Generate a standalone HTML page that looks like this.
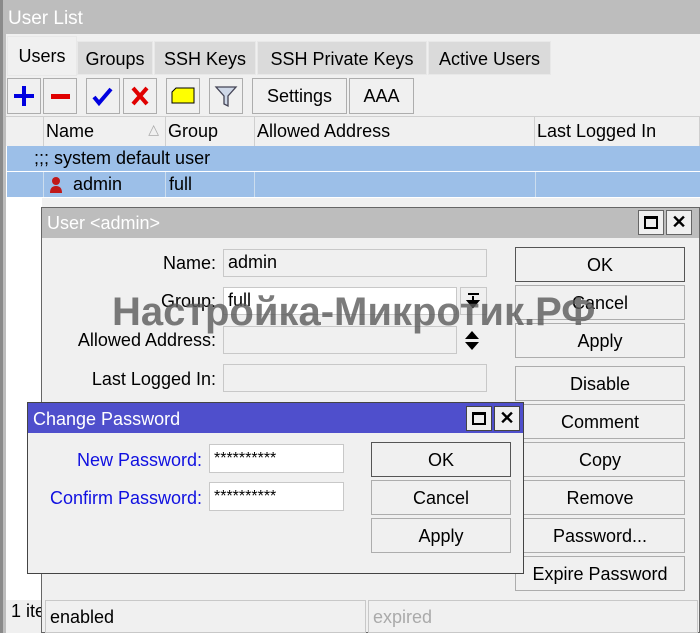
<!DOCTYPE html>
<html><head><meta charset="utf-8"><style>
*{box-sizing:border-box;margin:0;padding:0}
body{width:700px;height:633px;overflow:hidden;background:#f0f0f0;font-family:"Liberation Sans",sans-serif;font-size:18px;color:#000;position:relative}
.a{position:absolute}
.btn{position:absolute;border:1px solid #adadad;background:#f0f0f0;text-align:center;font-size:18px}
.tab{position:absolute;background:#dadada;border:1px solid #e8e8e8;text-align:center}
.hd{position:absolute;top:117px;height:29px;border-right:1px solid #cfcfcf;padding:4px 2px;background:#f0f0f0}
.inp{position:absolute;border:1px solid #c8c8c8;background:#f0f0f0;padding:2px 4px}
.lbl{position:absolute;text-align:right}
</style></head><body>
<div class="a" style="left:0;top:0;width:700px;height:34px;background:#bdbdbd;border-left:3px solid #8a8a8a"></div>
<div class="a" style="left:8px;top:8px;color:#fff;font-size:19px">User List</div>
<div class="a" style="left:0;top:34px;width:3px;height:599px;background:#8a8a8a"></div>
<div class="a" style="left:3px;top:34px;width:3px;height:599px;background:#bdbdbd"></div>
<div class="tab" style="left:7px;top:36px;width:70px;height:40px;background:#f0f0f0;padding-top:9px">Users</div>
<div class="tab" style="left:77px;top:41px;width:76px;height:34px;padding-top:7px">Groups</div>
<div class="tab" style="left:154px;top:41px;width:102px;height:34px;padding-top:7px">SSH Keys</div>
<div class="tab" style="left:257px;top:41px;width:170px;height:34px;padding-top:7px">SSH Private Keys</div>
<div class="tab" style="left:428px;top:41px;width:123px;height:34px;padding-top:7px">Active Users</div>
<div class="btn" style="left:7px;top:78px;width:34px;height:36px"><svg width="32" height="34"><path d="M16 7v20M6 17h20" stroke="#0000e0" stroke-width="4"/></svg></div>
<div class="btn" style="left:43px;top:78px;width:34px;height:36px"><div class="a" style="left:7px;top:15px;width:19px;height:5px;background:#e00000"></div></div>
<div class="btn" style="left:86px;top:78px;width:34px;height:36px"><svg width="32" height="34"><path d="M7 18l5 6 12-14" stroke="#0000e0" stroke-width="4" fill="none"/></svg></div>
<div class="btn" style="left:123px;top:78px;width:34px;height:36px"><svg width="32" height="34"><path d="M9 9l14 16M23 9l-14 16" stroke="#e00000" stroke-width="4"/></svg></div>
<div class="btn" style="left:166px;top:78px;width:34px;height:36px"><svg width="32" height="34"><path d="M5 13l4-4h18v15H5z" fill="#ffff00" stroke="#000" stroke-width="1"/></svg></div>
<div class="btn" style="left:209px;top:78px;width:34px;height:36px"><svg width="32" height="34"><path d="M6 8h20l-8 9v10l-4-2v-8z" fill="#cfd8e8" stroke="#445" stroke-width="1.3"/></svg></div>
<div class="btn" style="left:252px;top:78px;width:95px;height:36px;padding-top:7px">Settings</div>
<div class="btn" style="left:349px;top:78px;width:65px;height:36px;padding-top:7px">AAA</div>
<div class="a" style="left:6px;top:116px;width:694px;height:1px;background:#cfcfcf"></div>
<div class="hd" style="left:7px;width:37px"></div>
<div class="hd" style="left:44px;width:122px">Name<span style="position:absolute;right:6px;color:#aaa;font-size:14px">△</span></div>
<div class="hd" style="left:166px;width:89px">Group</div>
<div class="hd" style="left:255px;width:280px">Allowed Address</div>
<div class="hd" style="left:535px;width:165px">Last Logged In</div>
<div class="a" style="left:6px;top:146px;width:694px;height:52px;background:#fff"></div>
<div class="a" style="left:7px;top:146px;width:693px;height:25px;background:#9cbfe8;padding:2px 27px">;;; system default user</div>
<div class="a" style="left:7px;top:172px;width:693px;height:25px;background:#9cbfe8"></div>
<div class="a" style="left:43px;top:172px;width:1px;height:25px;background:#cde"></div>
<div class="a" style="left:165px;top:172px;width:1px;height:25px;background:#cde"></div>
<div class="a" style="left:254px;top:172px;width:1px;height:25px;background:#cde"></div>
<div class="a" style="left:535px;top:172px;width:1px;height:25px;background:#cde"></div>
<svg class="a" style="left:49px;top:176px" width="14" height="18"><circle cx="7" cy="5" r="4" fill="#c01818"/><path d="M1 17q0-7 6-7t6 7z" fill="#c01818"/></svg>
<div class="a" style="left:73px;top:174px">admin</div>
<div class="a" style="left:169px;top:174px">full</div>
<div class="a" style="left:6px;top:198px;width:36px;height:402px;background:#fff"></div>
<div class="a" style="left:11px;top:601px">1 ite</div>
<div class="a" style="left:41px;top:207px;width:659px;height:426px;border:1px solid #666;background:#f0f0f0"></div>
<div class="a" style="left:42px;top:208px;width:657px;height:30px;background:#bdbdbd"></div>
<div class="a" style="left:47px;top:213px;color:#fff">User &lt;admin&gt;</div>
<div class="a" style="left:638px;top:210px;width:26px;height:25px;border:1px solid #666;background:#f0f0f0"><div class="a" style="left:5px;top:5px;width:14px;height:13px;border:2px solid #000;border-top-width:3px"></div></div>
<div class="a" style="left:666px;top:210px;width:26px;height:25px;border:1px solid #666;background:#f0f0f0;text-align:center;font-weight:bold;line-height:22px">✕</div>
<div class="lbl" style="left:60px;width:156px;top:253px">Name:</div>
<div class="inp" style="left:223px;top:249px;width:264px;height:28px">admin</div>
<div class="lbl" style="left:60px;width:156px;top:291px">Group:</div>
<div class="inp" style="left:223px;top:287px;width:234px;height:28px;background:#fff">full</div>
<div class="a" style="left:460px;top:287px;width:27px;height:28px;border:1px solid #c8c8c8"><svg width="25" height="26"><path d="M7 6h11M12 8v6M7 13l5 6 5-6z" stroke="#000" stroke-width="2" fill="#000"/></svg></div>
<svg class="a" style="left:462px;top:328px" width="20" height="26"><path d="M3 11l7-8 7 8z" fill="#000"/><path d="M3 14l7 8 7-8z" fill="#000"/></svg>
<div class="lbl" style="left:40px;width:176px;top:330px">Allowed Address:</div>
<div class="inp" style="left:223px;top:326px;width:234px;height:28px"></div>
<div class="lbl" style="left:40px;width:176px;top:369px">Last Logged In:</div>
<div class="inp" style="left:223px;top:364px;width:264px;height:28px"></div>
<div class="btn" style="left:515px;top:247px;width:170px;height:35px;border-color:#555;padding-top:7px">OK</div>
<div class="btn" style="left:515px;top:285px;width:170px;height:35px;padding-top:7px">Cancel</div>
<div class="btn" style="left:515px;top:323px;width:170px;height:35px;padding-top:7px">Apply</div>
<div class="btn" style="left:515px;top:366px;width:170px;height:35px;padding-top:7px">Disable</div>
<div class="btn" style="left:515px;top:404px;width:170px;height:35px;padding-top:7px">Comment</div>
<div class="btn" style="left:515px;top:442px;width:170px;height:35px;padding-top:7px">Copy</div>
<div class="btn" style="left:515px;top:480px;width:170px;height:35px;padding-top:7px">Remove</div>
<div class="btn" style="left:515px;top:518px;width:170px;height:35px;padding-top:7px">Password...</div>
<div class="btn" style="left:515px;top:556px;width:170px;height:35px;padding-top:7px">Expire Password</div>
<div class="inp" style="left:45px;top:600px;width:321px;height:33px;padding-top:6px">enabled</div>
<div class="inp" style="left:368px;top:600px;width:330px;height:33px;padding-top:6px;color:#aaa">expired</div>
<div class="a" style="left:112px;top:290px;font-size:40px;font-weight:bold;color:rgba(90,90,90,0.8);white-space:nowrap">Настройка-Микротик.РФ</div>
<div class="a" style="left:27px;top:402px;width:497px;height:172px;border:1px solid #444;background:#f0f0f0"></div>
<div class="a" style="left:28px;top:403px;width:495px;height:30px;background:#4f4fcc"></div>
<div class="a" style="left:33px;top:409px;color:#fff">Change Password</div>
<div class="a" style="left:466px;top:406px;width:26px;height:25px;border:1px solid #444;background:#f0f0f0"><div class="a" style="left:5px;top:5px;width:14px;height:13px;border:2px solid #000;border-top-width:3px"></div></div>
<div class="a" style="left:494px;top:406px;width:26px;height:25px;border:1px solid #444;background:#f0f0f0;text-align:center;font-weight:bold;line-height:22px">✕</div>
<div class="lbl" style="left:30px;width:172px;top:450px;color:#1010e0">New Password:</div>
<div class="inp" style="left:209px;top:444px;width:135px;height:29px;background:#fff;font-size:16px;padding-top:5px">**********</div>
<div class="lbl" style="left:30px;width:172px;top:488px;color:#1010e0">Confirm Password:</div>
<div class="inp" style="left:209px;top:482px;width:135px;height:29px;background:#fff;font-size:16px;padding-top:5px">**********</div>
<div class="btn" style="left:371px;top:442px;width:140px;height:35px;border-color:#555;padding-top:7px">OK</div>
<div class="btn" style="left:371px;top:480px;width:140px;height:35px;padding-top:7px">Cancel</div>
<div class="btn" style="left:371px;top:518px;width:140px;height:35px;padding-top:7px">Apply</div>
</body></html>
